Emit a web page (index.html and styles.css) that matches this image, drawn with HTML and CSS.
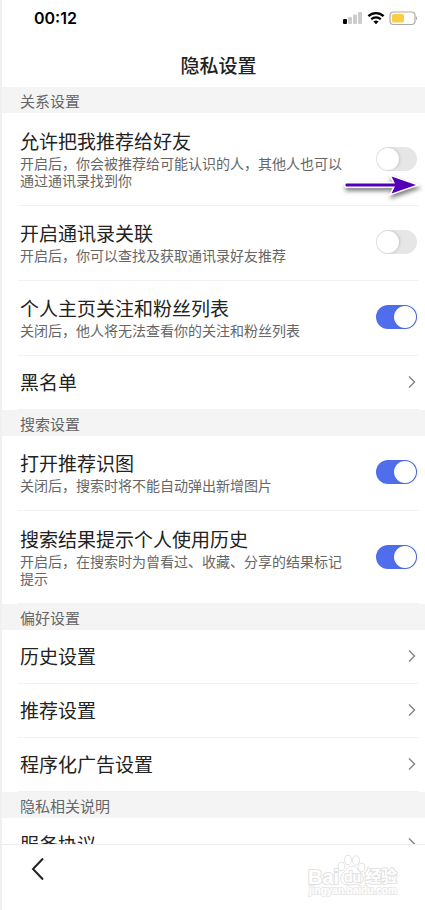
FILE: index.html
```html
<!DOCTYPE html>
<html lang="zh-CN">
<head>
    <meta charset="UTF-8">
    <meta name="viewport" content="width=device-width, initial-scale=1">
    <title>隐私设置</title>
    <link rel="stylesheet" href="styles.css">
</head>
<body>
    <div class="status-bar">
        <span class="time">00:12</span>
        <svg class="status-icons" width="76" height="16" viewBox="0 0 76 16">
            <!-- signal -->
            <rect x="2" y="9" width="4" height="5" rx="1" fill="#000"/>
            <rect x="7" y="7" width="4" height="7" rx="1" fill="#ccc"/>
            <rect x="12" y="4.500" width="4" height="9.500" rx="1" fill="#ccc"/>
            <rect x="17" y="2" width="4" height="12" rx="1" fill="#ccc"/>
            <!-- wifi -->
            <path d="M27.400 6.200a11 11 0 0 1 15.200 0" fill="none" stroke="#000" stroke-width="2.300"/>
            <path d="M30.200 9.200a7 7 0 0 1 9.600 0" fill="none" stroke="#000" stroke-width="2.200"/>
            <path d="M32.400 11.500a4 4 0 0 1 5.200 0L35 14.200z" fill="#000"/>
            <!-- battery -->
            <rect x="49" y="2" width="25" height="12.500" rx="3.500" fill="#fff" stroke="#aaa" stroke-width="1.200"/>
            <rect x="51" y="4" width="12" height="8.500" rx="1.500" fill="#f8ce46"/>
            <path d="M75.200 6.300q1.600 2 0 4z" fill="#888"/>
        </svg>
    </div>

    <header class="title-bar">
        <h1>隐私设置</h1>
    </header>

    <main class="settings">
        <h2 class="group">关系设置</h2>
        <label class="row row-tall">
            <span class="text">
                <span class="name">允许把我推荐给好友</span>
                <span class="desc">开启后，你会被推荐给可能认识的人，其他人也可以通过通讯录找到你</span>
            </span>
            <input class="switch" type="checkbox">
            <svg class="arrow" width="84" height="34" viewBox="0 0 84 34">
                <path d="M7 15.500H56L52.500 8.500L77 17L52.500 25.500L56 18.500H7Q5.500 17 7 15.500z" fill="#5200b8" stroke="#fff" stroke-width="3" paint-order="stroke"/>
            </svg>
        </label>
        <label class="row">
            <span class="text">
                <span class="name">开启通讯录关联</span>
                <span class="desc">开启后，你可以查找及获取通讯录好友推荐</span>
            </span>
            <input class="switch" type="checkbox">
        </label>
        <label class="row">
            <span class="text">
                <span class="name">个人主页关注和粉丝列表</span>
                <span class="desc">关闭后，他人将无法查看你的关注和粉丝列表</span>
            </span>
            <input class="switch" type="checkbox" checked>
        </label>
        <a class="row row-link" href="#">
            <span class="name">黑名单</span>
            <svg class="chevron" width="8" height="14" viewBox="0 0 8 14"><path d="M1 1.500L6.500 7L1 12.500"/></svg>
        </a>

        <h2 class="group">搜索设置</h2>
        <label class="row">
            <span class="text">
                <span class="name">打开推荐识图</span>
                <span class="desc">关闭后，搜索时将不能自动弹出新增图片</span>
            </span>
            <input class="switch" type="checkbox" checked>
        </label>
        <label class="row row-tall">
            <span class="text">
                <span class="name">搜索结果提示个人使用历史</span>
                <span class="desc">开启后，在搜索时为曾看过、收藏、分享的结果标记提示</span>
            </span>
            <input class="switch" type="checkbox" checked>
        </label>

        <h2 class="group">偏好设置</h2>
        <a class="row row-link" href="#">
            <span class="name">历史设置</span>
            <svg class="chevron" width="8" height="14" viewBox="0 0 8 14"><path d="M1 1.500L6.500 7L1 12.500"/></svg>
        </a>
        <a class="row row-link" href="#">
            <span class="name">推荐设置</span>
            <svg class="chevron" width="8" height="14" viewBox="0 0 8 14"><path d="M1 1.500L6.500 7L1 12.500"/></svg>
        </a>
        <a class="row row-link" href="#">
            <span class="name">程序化广告设置</span>
            <svg class="chevron" width="8" height="14" viewBox="0 0 8 14"><path d="M1 1.500L6.500 7L1 12.500"/></svg>
        </a>

        <h2 class="group">隐私相关说明</h2>
        <a class="row row-link" href="#">
            <span class="name">服务协议</span>
            <svg class="chevron" width="8" height="14" viewBox="0 0 8 14"><path d="M1 1.500L6.500 7L1 12.500"/></svg>
        </a>
    </main>

    <footer class="bottom-bar">
        <button class="back" type="button" aria-label="返回">
            <svg width="14" height="24" viewBox="0 0 14 24"><path d="M13 1.500L3 12L13 22.500"/></svg>
        </button>
        <svg class="watermark" width="94" height="46" viewBox="0 0 94 46">
            <ellipse cx="36.500" cy="13.500" rx="3.300" ry="4.300"/>
            <ellipse cx="43" cy="7" rx="3.500" ry="4.700"/>
            <ellipse cx="51" cy="7.500" rx="3.500" ry="4.700"/>
            <ellipse cx="56.500" cy="14.500" rx="3.300" ry="4.300"/>
            <path d="M47 13c4 0 5 3.500 8 6c5 4 4.500 12-2 12.500c-3 .3-9 .3-12 0c-6.500-.5-7-8.500-2-12.500c3-2.500 4-6 8-6z"/>
            <text class="brand" x="3" y="31">Bai</text>
            <text class="du" x="39" y="29">du</text>
            <text class="jingyan" x="60" y="29">经验</text>
            <text class="url" x="4" y="41">jingyan.baidu.com</text>
        </svg>
    </footer>
</body>
</html>
```

FILE: styles.css
```css
* {
    box-sizing: border-box;
}

body {
    margin: 0;
    height: 100vh;
    display: flex;
    flex-direction: column;
    border-left: 2px solid #f0f0f0;
    background: #fff;
    color: #222;
    font-family: "Noto Sans CJK SC", sans-serif;
}

.status-bar {
    display: flex;
    flex: none;
    align-items: center;
    justify-content: space-between;
    height: 36px;
    padding: 0 8px 0 32px;
}

.time {
    color: #000;
    font-family: Inter, sans-serif;
    font-size: 16px;
    font-weight: 600;
}

.title-bar {
    display: flex;
    flex: none;
    align-items: center;
    justify-content: center;
    height: 51px;
    padding: 6px 0 0 10px;
}

h1 {
    margin: 0;
    font-size: 19px;
    font-weight: 500;
    line-height: 26px;
}

.settings {
    flex: 1;
    min-height: 0;
    overflow-y: auto;
    scrollbar-width: none;
}

.group {
    margin: 0;
    padding: 3px 18px 1px;
    background: #f4f4f4;
    color: #666;
    font-size: 15px;
    font-weight: 400;
    line-height: 22px;
}

.row {
    position: relative;
    display: flex;
    align-items: center;
    justify-content: space-between;
    margin: 0 6px 0 16px;
    padding: 14px 2px 16px;
    border-bottom: 1px solid #f2f2f2;
    color: #222;
    text-decoration: none;
}

.row-tall {
    padding: 15px 2px 16px;
}

.row-link {
    padding: 13px 3px 14px 2px;
}

.text {
    flex: 1;
    padding-right: 30px;
}

.name {
    display: block;
    font-size: 19px;
    line-height: 26px;
}

.desc {
    display: block;
    margin-top: 1px;
    color: #666;
    font-size: 14px;
    line-height: 17px;
}

.switch {
    appearance: none;
    flex: none;
    width: 41px;
    height: 24px;
    margin: 0;
    padding: 1px;
    border-radius: 12px;
    background: #e6e6e6;
    cursor: pointer;
}

.switch::before {
    content: "";
    display: block;
    width: 22px;
    height: 22px;
    border-radius: 50%;
    background: #fff;
    box-shadow: 1px 0 3px rgba(0, 0, 0, 0.15);
}

.switch:checked {
    background: #506eeb;
}

.switch:checked::before {
    margin-left: 17px;
}

.chevron path {
    fill: none;
    stroke: #888;
    stroke-width: 1.5;
}

/* arrow lies over the first row */
.arrow {
    position: absolute;
    right: -4px;
    bottom: 3px;
    filter: drop-shadow(1px 3px 2px rgba(0, 0, 0, 0.5));
    pointer-events: none;
}

.bottom-bar {
    display: flex;
    flex: none;
    align-items: flex-start;
    justify-content: space-between;
    height: 66px;
    padding: 8px 26px 0 22px;
    border-top: 1px solid #eee;
}

.back {
    display: flex;
    padding: 4px 6px;
    border: none;
    background: none;
    cursor: pointer;
}

.back path {
    fill: none;
    stroke: #222;
    stroke-width: 2;
}

.watermark {
    fill: #fff;
    stroke: #e2e2e2;
    stroke-width: 1;
}

.watermark text {
    font-family: "Liberation Sans", "Noto Sans CJK SC", sans-serif;
    font-weight: 700;
    paint-order: stroke;
    stroke-width: 2;
}

.brand {
    font-size: 20px;
}

.watermark .du {
    font-size: 14px;
}

.jingyan {
    font-size: 16px;
}

.watermark .url {
    font-size: 10px;
    stroke: #eaeaea;
}
```
